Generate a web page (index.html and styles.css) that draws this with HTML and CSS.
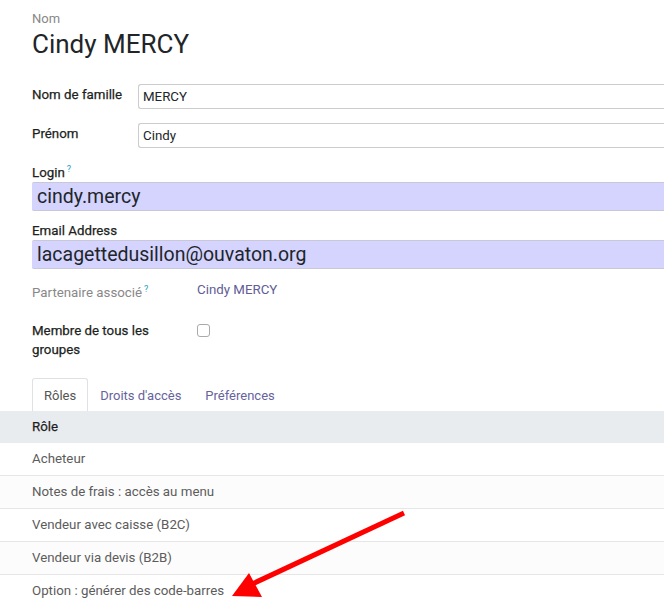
FILE: index.html
```html
<!DOCTYPE html>
<html lang="fr">
<head>
    <meta charset="UTF-8">
    <meta name="viewport" content="width=device-width, initial-scale=1.0">
    <title>Cindy MERCY</title>
    <link rel="stylesheet" href="styles.css">
</head>
<body>
    <div class="sheet">
        <div class="title-block">
            <div class="title-label">Nom</div>
            <h1>Cindy MERCY</h1>
        </div>

        <div class="name-group">
            <div class="field-row">
                <label>Nom de famille</label>
                <div class="input">MERCY</div>
            </div>
            <div class="field-row">
                <label>Prénom</label>
                <div class="input">Cindy</div>
            </div>
        </div>

        <div class="big-field">
            <label>Login<sup>?</sup></label>
            <div class="input big">cindy.mercy</div>
        </div>
        <div class="big-field">
            <label>Email Address</label>
            <div class="input big">lacagettedusillon@ouvaton.org</div>
        </div>

        <div class="info-group">
            <div class="info-row">
                <span class="muted">Partenaire associé<sup>?</sup></span>
                <a href="#" class="link">Cindy MERCY</a>
            </div>
            <div class="info-row">
                <label>Membre de tous les groupes</label>
                <span class="checkbox"></span>
            </div>
        </div>

        <ul class="tabs">
            <li class="active">Rôles</li>
            <li>Droits d'accès</li>
            <li>Préférences</li>
        </ul>

        <table class="roles">
            <thead>
                <tr><th>Rôle</th></tr>
            </thead>
            <tbody>
                <tr><td>Acheteur</td></tr>
                <tr><td>Notes de frais : accès au menu</td></tr>
                <tr><td>Vendeur avec caisse (B2C)</td></tr>
                <tr><td>Vendeur via devis (B2B)</td></tr>
                <tr><td>Option : générer des code-barres</td></tr>
            </tbody>
        </table>
    </div>

    <!-- Red arrow annotation -->
    <svg class="arrow" width="664" height="604" viewBox="0 0 664 604">
        <line x1="404" y1="513" x2="250" y2="585" stroke="#ff0000" stroke-width="5"/>
        <polygon points="249,573 232,596 262,597" fill="#ff0000"/>
    </svg>
</body>
</html>
```

FILE: styles.css
```css
body {
    margin: 0;
    font-family: Roboto, "Noto Sans", sans-serif;
    font-size: 13.3px;
    color: #212529;
    background: #fff;
    overflow: hidden;
    position: relative;
    width: 664px;
    height: 604px;
}

.sheet {
    width: 632px;
    padding-left: 32px;
}

.title-block {
    padding-top: 11px;
}

.title-label {
    color: #888;
    font-size: 13px;
    line-height: 16px;
}

h1 {
    margin: 0;
    font-size: 26px;
    font-weight: 400;
    line-height: 34px;
}

.name-group {
    margin-top: 23px;
}

.field-row {
    display: grid;
    grid-template-columns: 106px 1fr;
    align-items: start;
    margin-bottom: 14px;
}

.field-row label {
    padding-top: 3px;
}

label {
    font-weight: 400;
    color: #1d1f22;
    -webkit-text-stroke: 0.25px #1d1f22;
}

.input {
    border: 1px solid #ccc;
    border-right: none;
    border-radius: 3px 0 0 3px;
    height: 23px;
    line-height: 23px;
    padding-left: 4px;
}

.big-field {
    display: flex;
    flex-direction: column;
}

.big-field label {
    line-height: 18px;
    margin-top: -2px;
}

.big-field + .big-field label {
    margin-top: 11px;
}

.input.big {
    background: #d4d4ff;
    border: none;
    border-top: 1px solid #c8c8d8;
    border-bottom: 1px solid #c8c8d8;
    border-radius: 2px 0 0 2px;
    height: 27px;
    line-height: 27px;
    font-size: 19.5px;
    padding-left: 5px;
}

sup {
    color: #1f9dc7;
    font-size: 9px;
    margin-left: 2px;
    -webkit-text-stroke: 0;
}

.info-group {
    margin-top: 11px;
}

.info-row {
    display: grid;
    grid-template-columns: 165px 1fr;
    align-items: start;
    line-height: 19px;
}

.info-row + .info-row {
    margin-top: 18px;
}

.info-row label {
    width: 130px;
}

.muted {
    color: #888;
}

.link {
    color: #5f5d96;
    text-decoration: none;
}

.checkbox {
    display: block;
    width: 11px;
    height: 11px;
    border: 1px solid #aaa;
    border-radius: 3px;
    margin-top: 3px;
}

.tabs {
    list-style: none;
    margin: 19px 0 0 0;
    padding: 0;
    display: flex;
    height: 33px;
}

.tabs li {
    padding: 0 11px;
    font-size: 13px;
    line-height: 33px;
    color: #66639e;
    border: 1px solid transparent;
    border-bottom: none;
    border-radius: 3px 3px 0 0;
}

.tabs li.active {
    color: #555;
    border-color: #dee2e6;
    background: #fff;
}

.roles {
    width: 664px;
    margin-left: -32px;
    border-collapse: collapse;
}

.roles th,
.roles td {
    text-align: left;
    padding: 0 0 0 32px;
}

.roles th {
    background: #e9ecef;
    height: 32px;
    font-weight: 400;
    color: #1d1f22;
    -webkit-text-stroke: 0.25px #1d1f22;
}

.roles td {
    height: 32px;
    color: #5c5c5c;
    border-bottom: 1px solid #e6e6e6;
}

.roles tbody tr:nth-child(even) td {
    background: #fcfcfc;
}

.arrow {
    position: absolute;
    top: 0;
    left: 0;
    pointer-events: none;
}
```
